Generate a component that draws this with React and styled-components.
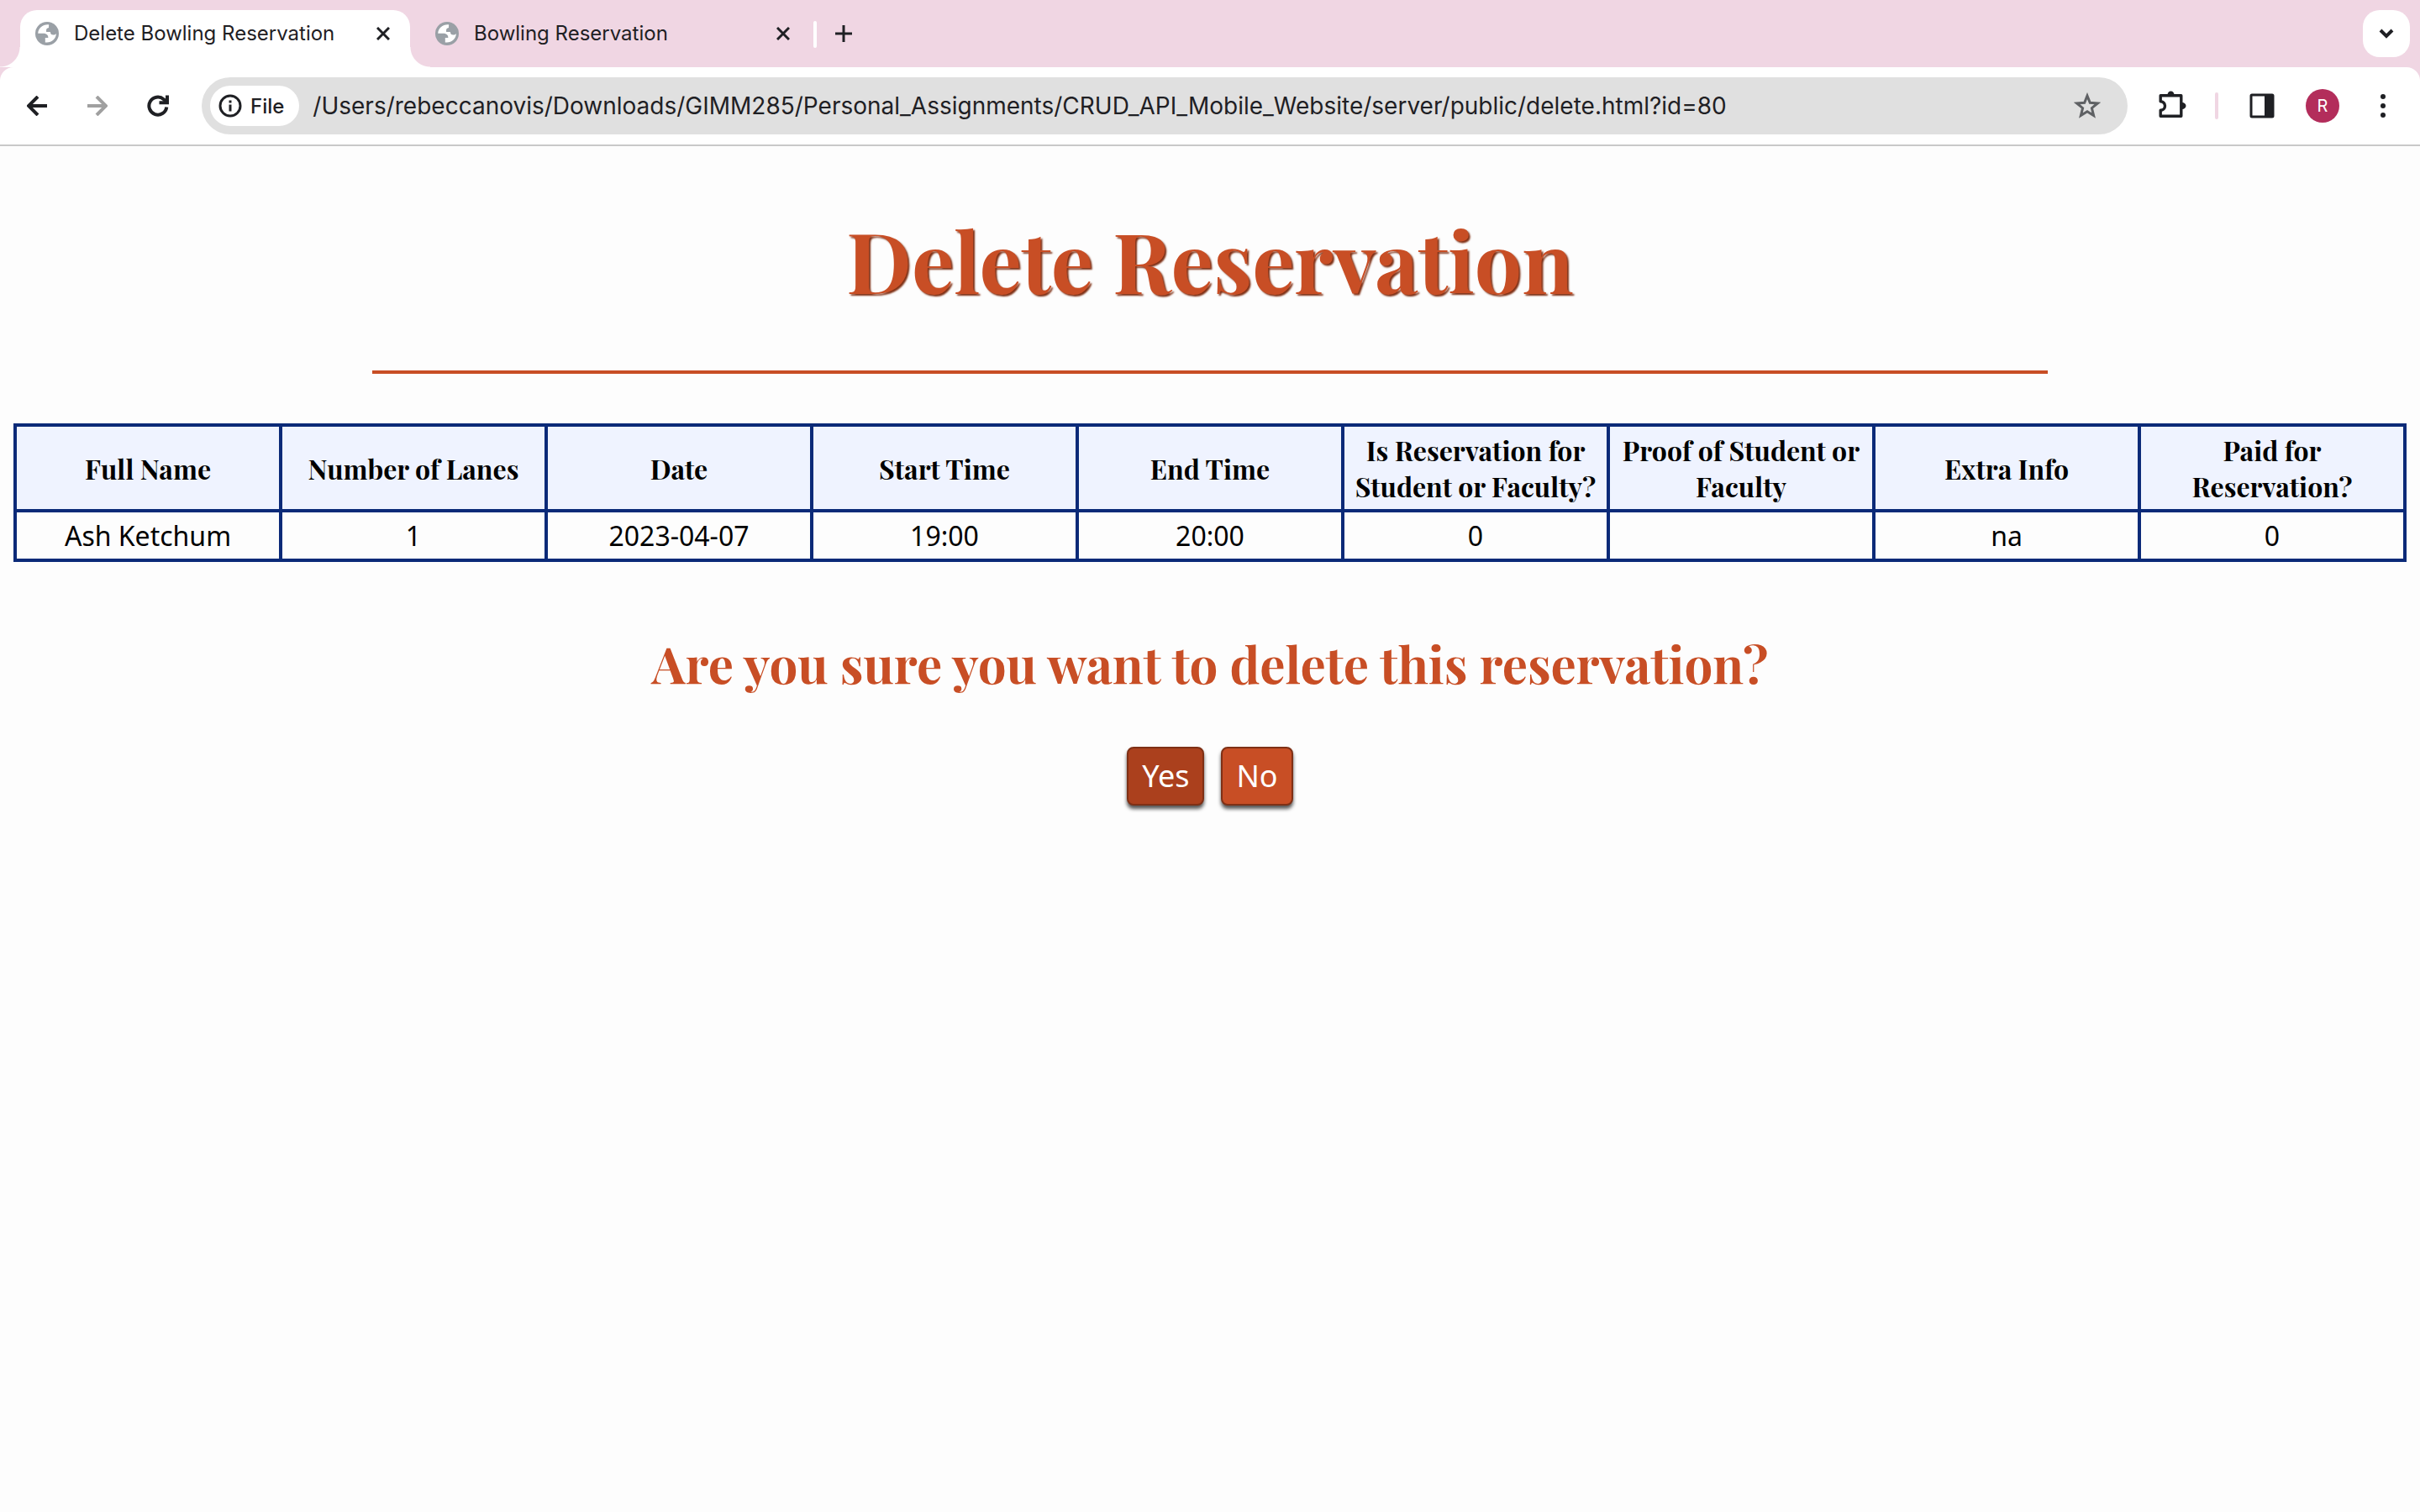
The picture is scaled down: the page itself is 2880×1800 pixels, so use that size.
import React, { useState } from "react";
import styled, { createGlobalStyle, css } from "styled-components";

const ui = `Inter, Roboto, sans-serif`;
const display = `"Playfair Display", "Liberation Serif", serif`;
const body = `"Noto Sans", "Open Sans", sans-serif`;

const GlobalStyle = createGlobalStyle`
  *, *::before, *::after { box-sizing: border-box; }
  html, body { margin: 0; background: #fdfdfd; }
  button, input { font: inherit; color: inherit; margin: 0; }
`;

const TabStrip = styled.header`
  display: flex;
  align-items: flex-end;
  height: 80px;
  padding: 0 12px 0 24px;
  background: #f0d6e3;
  font-family: ${ui};
  color: #1f2024;
`;

const Tab = styled.div`
  position: relative;
  display: flex;
  align-items: center;
  width: ${(p) => (p.$active ? 464 : 480)}px;
  height: 68px;
  padding: 0 ${(p) => (p.$active ? 12 : 16)}px 12px ${(p) => (p.$active ? 18 : 30)}px;
  border-radius: 20px 20px 0 0;
  ${(p) =>
    p.$active &&
    css`
      background: #fff;
      &::before,
      &::after {
        content: "";
        position: absolute;
        bottom: 0;
        width: 24px;
        height: 24px;
      }
      &::before {
        right: 100%;
        background: radial-gradient(circle at 0 0, transparent 23px, #fff 24px);
      }
      &::after {
        left: 100%;
        background: radial-gradient(circle at 100% 0, transparent 23px, #fff 24px);
      }
    `}
`;

const PlainButton = styled.button`
  display: flex;
  align-items: center;
  justify-content: center;
  padding: 0;
  border: 0;
  background: none;
`;

const TabTitle = styled(PlainButton)`
  flex: 1;
  justify-content: flex-start;
  gap: 18px;
  font-size: 24px;
  line-height: 32px;
  white-space: nowrap;
`;

const TabAction = styled(PlainButton)`
  width: 40px;
  height: 40px;
`;

const Divider = styled.span`
  width: 4px;
  height: 32px;
  border-radius: 2px;
  background: ${(p) => p.$color};
`;

const TabDivider = styled(Divider)`
  margin-bottom: 23px;
`;

const NewTab = styled(TabAction)`
  margin: 0 auto 20px 12px;
`;

const TabSearch = styled(PlainButton)`
  width: 56px;
  height: 56px;
  margin-bottom: 12px;
  border-radius: 20px;
  background: #fff;
`;

const ToolbarBack = styled.div`
  background: #f0d6e3;
`;

const Toolbar = styled.div`
  display: flex;
  align-items: center;
  gap: 16px;
  height: 94px;
  padding: 0 16px;
  border-bottom: 2px solid #c9c9c9;
  border-radius: 16px 16px 0 0;
  background: #fff;
  font-family: ${ui};
  color: #1f2024;
`;

const ToolButton = styled(PlainButton)`
  width: 56px;
  height: 56px;
  color: ${(p) => (p.$muted ? "#a0a0a0" : "#1f2024")};
`;

const AddressBar = styled.div`
  display: flex;
  flex: 1;
  align-items: center;
  height: 68px;
  margin: 0 10px 0 8px;
  padding: 0 20px 0 10px;
  border-radius: 34px;
  background: #e0e0e0;
`;

const SiteChip = styled(PlainButton)`
  gap: 10px;
  height: 48px;
  padding: 0 18px 0 10px;
  border-radius: 24px;
  background: #fff;
  font-size: 24px;
  font-weight: 500;
`;

const AddressInput = styled.input`
  flex: 1;
  min-width: 0;
  height: 48px;
  padding: 0 0 0 16px;
  border: 0;
  outline: 0;
  background: none;
  font-size: 28px;
`;

const StarButton = styled(PlainButton)`
  width: 56px;
  height: 56px;
  color: #5f6164;
`;

const ToolDivider = styled(Divider)`
  margin: 0 8px 0 6px;
`;

const Avatar = styled.span`
  display: flex;
  align-items: center;
  justify-content: center;
  width: 40px;
  height: 40px;
  border-radius: 50%;
  background: #b32d5b;
  color: #fff;
  font-size: 20px;
`;

const Page = styled.main`
  padding: 16px;
  font-family: ${body};
  color: #000;
  text-align: center;
`;

const Title = styled.h1`
  margin: 52px 0 0;
  font: bold 100px/134px ${display};
  color: #c84e25;
  text-shadow: 2px 2px 2px #7f3015;
`;

const Rule = styled.hr`
  width: 70%;
  height: 4px;
  margin: 65px auto 59px;
  border: 0;
  background: #c84e25;
`;

const Table = styled.table`
  width: 100%;
  table-layout: fixed;
  border-collapse: collapse;
  border: 4px solid #0b2a78;
`;

const HeadCell = styled.th`
  padding: 6px;
  border: 4px solid #0b2a78;
  background: #eff3ff;
  font: bold 32px/43px ${display};
`;

const Cell = styled.td`
  height: 59px;
  padding: 0 6px;
  border: 4px solid #0b2a78;
  font-size: 32px;
  line-height: 44px;
`;

const Question = styled.h2`
  margin: 80px 0 0;
  font: bold 60px/80px ${display};
  color: #c84e25;
`;

const Actions = styled.div`
  display: flex;
  justify-content: center;
  gap: 20px;
  margin-top: 60px;
`;

const ActionButton = styled.button`
  height: 70px;
  padding: 0 16px;
  border: 2px solid #7f3015;
  border-radius: 8px;
  background: ${(p) => (p.$pressed ? "#ab401d" : "#c84e25")};
  box-shadow: 0 4px 4px #555;
  font-size: 36px;
  line-height: 48px;
  color: #fff;
`;

const Globe = () => (
  <svg width="28" height="28" viewBox="0 0 28 28" aria-hidden="true">
    <circle cx="14" cy="14" r="14" fill="#9aa0a6" />
    <path
      d="M16 3.300C9 2.800 3.500 7.500 3.200 13.800h6c3.700 0 6.200 1.600 6.200 5.200h-3.600v5.400c7 1.100 12.800-3.800 13.100-10.400-1 1.200-2 1.600-3.500 1.600-2.400 0-3.300-1.200-3.500-3.600h-4.800c-.5-3.300.7-4.700 3-4.900-.3-1.700.4-2.700-.1-3.800z"
      fill="#fff"
    />
  </svg>
);

const Stroke = ({ size, d, width = 3, children }) => (
  <svg
    width={size}
    height={size}
    viewBox={`0 0 ${size} ${size}`}
    fill="none"
    stroke="currentColor"
    strokeWidth={width}
    aria-hidden="true"
  >
    {d && <path d={d} />}
    {children}
  </svg>
);

const CloseIcon = () => <Stroke size={16} d="M1 1l14 14M15 1L1 15" />;

const tabs = ["Delete Bowling Reservation", "Bowling Reservation"];

const columns = [
  ["Full Name", "Ash Ketchum"],
  ["Number of Lanes", "1"],
  ["Date", "2023-04-07"],
  ["Start Time", "19:00"],
  ["End Time", "20:00"],
  ["Is Reservation for Student or Faculty?", "0"],
  ["Proof of Student or Faculty", ""],
  ["Extra Info", "na"],
  ["Paid for Reservation?", "0"],
];

export default function App() {
  const [url, setUrl] = useState(
    "/Users/rebeccanovis/Downloads/GIMM285/Personal_Assignments/CRUD_API_Mobile_Website/server/public/delete.html?id=80"
  );
  return (
    <>
      <GlobalStyle />
      <TabStrip>
        {tabs.map((name, i) => (
          <Tab key={name} $active={i === 0}>
            <TabTitle type="button">
              <Globe />
              {name}
            </TabTitle>
            <TabAction type="button" aria-label={`Close ${name}`}>
              <CloseIcon />
            </TabAction>
          </Tab>
        ))}
        <TabDivider $color="#fff" />
        <NewTab type="button" aria-label="New tab">
          <Stroke size={20} d="M10 0v20M0 10h20" />
        </NewTab>
        <TabSearch type="button" aria-label="Search tabs">
          <Stroke size={20} d="M3 6l7 7 7-7" width={4} />
        </TabSearch>
      </TabStrip>
      <ToolbarBack>
        <Toolbar>
          <ToolButton type="button" aria-label="Back">
            <Stroke size={24} d="M24 12H2M13 1L2 12l11 11" width={4} />
          </ToolButton>
          <ToolButton type="button" aria-label="Forward" $muted>
            <Stroke size={24} d="M0 12h22M11 1l11 11-11 11" width={4} />
          </ToolButton>
          <ToolButton type="button" aria-label="Reload">
            <Stroke size={26} width={4}>
              <path d="M23.300 14.500A10.500 10.500 0 1 1 19.800 5.200l3.500 3.600" />
              <path d="M24 .5v8.700H14.500" />
            </Stroke>
          </ToolButton>
          <AddressBar>
            <SiteChip type="button">
              <Stroke size={28}>
                <circle cx="14" cy="14" r="12" />
                <path d="M14 12.500v8M14 7.500v3" />
              </Stroke>
              File
            </SiteChip>
            <AddressInput
              aria-label="Address"
              value={url}
              onChange={(e) => setUrl(e.target.value)}
            />
            <StarButton type="button" aria-label="Bookmark this page">
              <Stroke
                size={32}
                d="M16 4l3.300 8.300 9 .7-6.900 5.700 2.200 8.800L16 22.800l-7.600 4.700 2.200-8.800L3.700 13l9-.7z"
              />
            </StarButton>
          </AddressBar>
          <ToolButton type="button" aria-label="Extensions">
            <Stroke size={36} width={3.4}>
              <path
                d="M3.200 5.700h24.600v24.600H3.200v-7a5.300 5.300 0 0 0 0-10.600z"
                strokeLinejoin="round"
              />
              <path
                d="M11.500 5a4 4.500 0 0 1 8 0zM29 14a4.500 4 0 0 1 0 8z"
                fill="currentColor"
                stroke="none"
              />
            </Stroke>
          </ToolButton>
          <ToolDivider $color="#f0d6e3" />
          <ToolButton type="button" aria-label="Side panel">
            <Stroke size={30}>
              <rect x="2" y="2" width="26" height="26" rx="1" />
              <path d="M18 2h10v26H18z" fill="currentColor" stroke="none" />
            </Stroke>
          </ToolButton>
          <ToolButton type="button" aria-label="Profile">
            <Avatar>R</Avatar>
          </ToolButton>
          <ToolButton type="button" aria-label="Menu">
            <svg width="6" height="28" viewBox="0 0 6 28" fill="currentColor" aria-hidden="true">
              <circle cx="3" cy="3" r="3" />
              <circle cx="3" cy="14" r="3" />
              <circle cx="3" cy="25" r="3" />
            </svg>
          </ToolButton>
        </Toolbar>
      </ToolbarBack>
      <Page>
        <Title>Delete Reservation</Title>
        <Rule />
        <Table>
          <thead>
            <tr>
              {columns.map(([head]) => (
                <HeadCell key={head} scope="col">{head}</HeadCell>
              ))}
            </tr>
          </thead>
          <tbody>
            <tr>
              {columns.map(([head, value]) => (
                <Cell key={head}>{value}</Cell>
              ))}
            </tr>
          </tbody>
        </Table>
        <Question>Are you sure you want to delete this reservation?</Question>
        <Actions>
          <ActionButton type="button" $pressed>Yes</ActionButton>
          <ActionButton type="button">No</ActionButton>
        </Actions>
      </Page>
    </>
  );
}
